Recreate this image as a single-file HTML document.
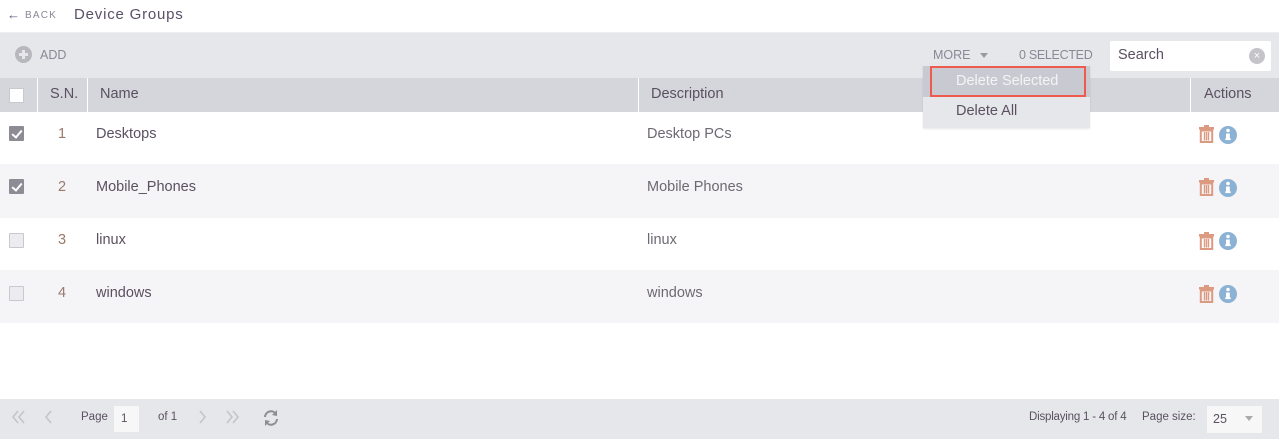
<!DOCTYPE html>
<html><head><meta charset="utf-8"><style>
*{margin:0;padding:0;box-sizing:border-box}
body{width:1279px;height:439px;background:#fff;font-family:"Liberation Sans",sans-serif;color:#5a5060;position:relative;overflow:hidden;font-size:14px}
.a{position:absolute}
.cb{position:absolute;width:15px;height:15px;border:1px solid #c8c8cf;background:#ececf0;border-radius:1px}
.cb.on{background:#8e8b94;border-color:#8e8b94}
.cb.on:after{content:"";position:absolute;left:4px;top:1px;width:4px;height:8px;border:solid #fff;border-width:0 2px 2px 0;transform:rotate(40deg)}
.row{position:absolute;left:0;width:1279px}
.t{position:absolute;font-size:14.5px;color:#5a5060}
.sn{position:absolute;left:58px;font-size:14.5px;color:#9a7a6a}
.desc{position:absolute;left:647px;font-size:14.5px;color:#6e6872}
</style></head><body>
<div class="a" style="left:0;top:0;width:1279px;height:33px;background:#fff;border-bottom:1px solid #eee"></div>
<div class="a" style="left:7px;top:7px;font-size:13px;font-weight:bold;color:#5f5a80">&#8592;</div>
<div class="a" style="left:25px;top:10px;font-size:10px;letter-spacing:1.2px;color:#8b8796">BACK</div>
<div class="a" style="left:74px;top:6px;font-size:15px;letter-spacing:0.8px;color:#5a5068">Device Groups</div>

<div class="a" style="left:0;top:33px;width:1279px;height:45px;background:#e6e7eb"></div>
<div class="a" style="left:15px;top:46px;width:17px;height:17px;border-radius:50%;background:#b7b7bd"></div>
<div class="a" style="left:22px;top:50px;width:3px;height:9px;background:#e6e7eb"></div>
<div class="a" style="left:19px;top:53px;width:9px;height:3px;background:#e6e7eb"></div>
<div class="a" style="left:40px;top:48px;font-size:12.5px;color:#8b8796">ADD</div>
<div class="a" style="left:933px;top:48px;font-size:12.5px;color:#8b8796">MORE</div>
<div class="a" style="left:980px;top:53px;width:0;height:0;border-left:4px solid transparent;border-right:4px solid transparent;border-top:5px solid #9a98a0"></div>
<div class="a" style="left:1019px;top:48px;font-size:12.5px;letter-spacing:-0.3px;color:#8b8796">0 SELECTED</div>
<div class="a" style="left:1110px;top:41px;width:161px;height:30px;background:#fff;border-radius:2px"></div>
<div class="a" style="left:1118px;top:47px;font-size:14.5px;color:#5a5060">Search</div>
<div class="a" style="left:1249px;top:48px;width:16px;height:16px;border-radius:50%;background:#c4c4c9;color:#fff;font-size:11px;line-height:16px;text-align:center">×</div>

<div class="a" style="left:0;top:78px;width:1279px;height:34px;background:#d5d6dc"></div>
<div class="a" style="left:37px;top:78px;width:1px;height:34px;background:#fff"></div>
<div class="a" style="left:87px;top:78px;width:1px;height:34px;background:#fff"></div>
<div class="a" style="left:638px;top:78px;width:1px;height:34px;background:#fff"></div>
<div class="a" style="left:1190px;top:78px;width:1px;height:34px;background:#fff"></div>
<div class="cb" style="left:9px;top:88px;background:#fff"></div>
<div class="t" style="left:50px;top:86px">S.N.</div>
<div class="t" style="left:100px;top:86px">Name</div>
<div class="t" style="left:651px;top:86px">Description</div>
<div class="t" style="left:1204px;top:86px">Actions</div>

<div class="row" style="top:112px;height:52px;background:#fff"></div>
<div class="row" style="top:164px;height:54px;background:#f5f5f8"></div>
<div class="row" style="top:218px;height:52px;background:#fff"></div>
<div class="row" style="top:270px;height:53px;background:#f5f5f8"></div>

<div class="cb on" style="left:9px;top:126px"></div><div class="sn" style="top:126px">1</div><div class="t" style="left:96px;top:126px">Desktops</div><div class="desc" style="top:126px">Desktop PCs</div>
<div class="cb on" style="left:9px;top:179px"></div><div class="sn" style="top:179px">2</div><div class="t" style="left:96px;top:179px">Mobile_Phones</div><div class="desc" style="top:179px">Mobile Phones</div>
<div class="cb" style="left:9px;top:233px"></div><div class="sn" style="top:232px">3</div><div class="t" style="left:96px;top:232px">linux</div><div class="desc" style="top:232px">linux</div>
<div class="cb" style="left:9px;top:286px"></div><div class="sn" style="top:285px">4</div><div class="t" style="left:96px;top:285px">windows</div><div class="desc" style="top:285px">windows</div>

<svg class="a" style="left:0;top:0" width="1279" height="439">
<defs>
<g id="tr"><rect x="0" y="2" width="15" height="2.5" fill="#dc9a80"/><rect x="5" y="0" width="5" height="2.5" fill="#dc9a80"/><rect x="1.8" y="5.5" width="11.4" height="11.5" fill="none" stroke="#dc9a80" stroke-width="2"/><rect x="4.8" y="7" width="1.4" height="8.5" fill="#dc9a80"/><rect x="6.8" y="7" width="1.4" height="8.5" fill="#dc9a80"/><rect x="8.8" y="7" width="1.4" height="8.5" fill="#dc9a80"/></g>
<g id="in"><circle cx="9" cy="9" r="9" fill="#8bb2d4"/><circle cx="9" cy="4.5" r="1.8" fill="#fff"/><rect x="7" y="7.5" width="3.8" height="6" fill="#fff"/><rect x="6.3" y="12.3" width="5.4" height="1.8" fill="#fff"/></g>
<g fill="none" stroke="#c4c4ca" stroke-width="1.6">
<polyline points="18,412 13,418 18,424"/><polyline points="24,412 19,418 24,424"/>
<polyline points="51,412 46,418 51,424"/>
<polyline points="200,412 205,418 200,424"/>
<polyline points="227,412 232,418 227,424"/><polyline points="233,412 238,418 233,424"/>
</g>
<g fill="none" stroke="#d5d5da" stroke-width="1" stroke-dasharray="2,2">
<line x1="68" y1="410" x2="68" y2="426"/><line x1="184" y1="410" x2="184" y2="426"/><line x1="253" y1="410" x2="253" y2="426"/><line x1="1136" y1="410" x2="1136" y2="426"/>
</g>
<g fill="none" stroke="#8e8c94" stroke-width="2">
<path d="M265,417 a6,6 0 0 1 11,-3"/><path d="M277,420 a6,6 0 0 1 -11,3"/>
</g>
<polygon points="277,410 277,416 272,415" fill="#8e8c94"/><polygon points="265,427 265,421 270,422" fill="#8e8c94"/>
</defs>
<use href="#tr" x="1199" y="125"/><use href="#in" x="1219" y="126"/>
<use href="#tr" x="1199" y="178"/><use href="#in" x="1219" y="179"/>
<use href="#tr" x="1199" y="232"/><use href="#in" x="1219" y="232"/>
<use href="#tr" x="1199" y="285"/><use href="#in" x="1219" y="285"/>
</svg>

<div class="a" style="left:923px;top:64px;width:167px;height:64px;background:#e6e7eb;box-shadow:0 1px 2px rgba(0,0,0,.1)"></div>
<div class="a" style="left:923px;top:66px;width:167px;height:31px;background:#c9cad1"></div>
<div class="a" style="left:930px;top:66px;width:156px;height:31px;border:2px solid #ee5a4e"></div>
<div class="a" style="left:956px;top:73px;font-size:14.5px;color:#f4f4f6">Delete Selected</div>
<div class="a" style="left:956px;top:103px;font-size:14.5px;color:#5a5060">Delete All</div>

<div class="a" style="left:0;top:399px;width:1279px;height:40px;background:#e6e7eb"></div>
<svg class="a" style="left:0;top:399px" width="300" height="40">
<g fill="none" stroke="#c4c4ca" stroke-width="1.6">
<polyline points="18,12 13,18 18,24"/><polyline points="24,12 19,18 24,24"/>
<polyline points="51,12 46,18 51,24"/>
<polyline points="200,12 205,18 200,24"/>
<polyline points="227,12 232,18 227,24"/><polyline points="233,12 238,18 233,24"/>
</g>
<g fill="none" stroke="#8e8c94" stroke-width="2">
<path d="M265,18 a6,6 0 0 1 11,-3"/><path d="M277,20 a6,6 0 0 1 -11,3"/>
</g>
<polygon points="277,11 277,17 272,16" fill="#8e8c94"/><polygon points="265,27 265,21 270,22" fill="#8e8c94"/>
</svg>
<div class="a" style="left:81px;top:411px;font-size:11.5px;color:#5a5060">Page</div>
<div class="a" style="left:114px;top:406px;width:25px;height:26px;background:#f7f7f8"></div>
<div class="a" style="left:121px;top:413px;font-size:11.5px">1</div>
<div class="a" style="left:158px;top:411px;font-size:11.5px">of 1</div>
<div class="a" style="left:1029px;top:411px;font-size:11.5px;letter-spacing:-0.2px">Displaying 1 - 4 of 4</div>
<div class="a" style="left:1142px;top:411px;font-size:11.5px">Page size:</div>
<div class="a" style="left:1207px;top:406px;width:55px;height:27px;background:#f7f7f8"></div>
<div class="a" style="left:1213px;top:412px;font-size:12.5px">25</div>
<div class="a" style="left:1245px;top:416px;width:0;height:0;border-left:4px solid transparent;border-right:4px solid transparent;border-top:5px solid #aaa"></div>
</body></html>
